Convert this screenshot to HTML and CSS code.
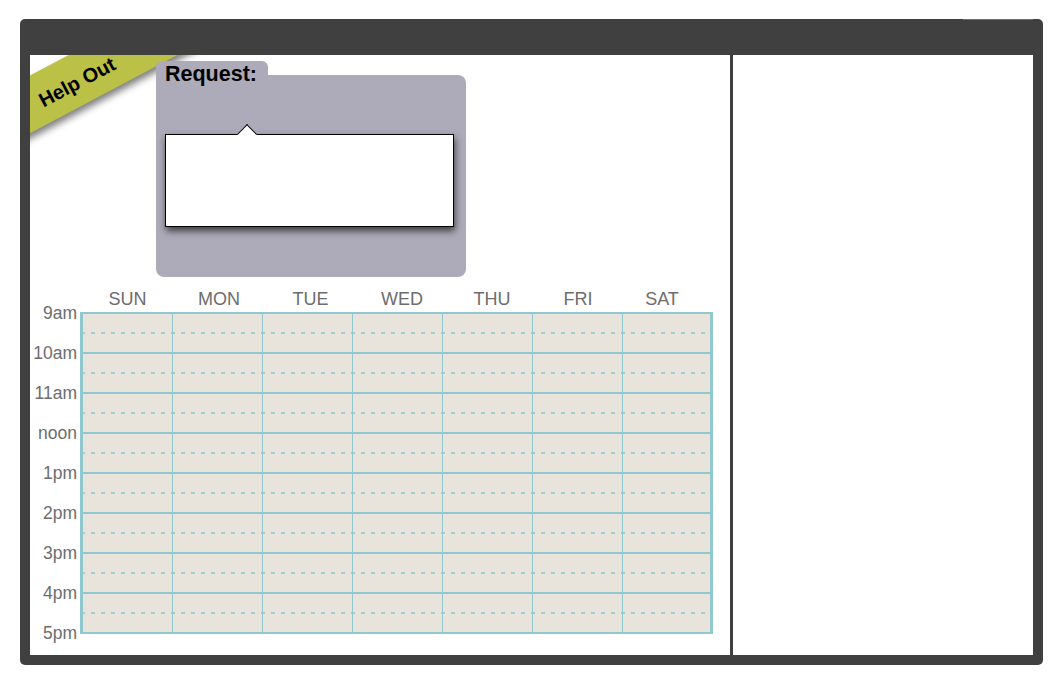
FILE: index.html
```html
<!DOCTYPE html>
<html lang="en">
<head>
<meta charset="utf-8">
<title>Help Out</title>
<link rel="stylesheet" href="styles.css">
</head>
<body>
<div class="frame">
  <div class="titlebar"><span class="titlebar-mark"></span></div>
  <div class="panes">
    <main class="left-pane">
      <div class="ribbon"><div class="ribbon-band"></div></div>
      <span class="ribbon-label">Help Out</span>
      <section class="request">
        <div class="request-tab">Request:</div>
        <div class="request-body">
          <div class="request-input"></div>
        </div>
      </section>
      <section class="calendar">
        <div class="cal-head">
          <span>SUN</span><span>MON</span><span>TUE</span><span>WED</span><span>THU</span><span>FRI</span><span>SAT</span>
        </div>
        <div class="cal-body">
          <div class="times">
            <span>9am</span><span>10am</span><span>11am</span><span>noon</span><span>1pm</span><span>2pm</span><span>3pm</span><span>4pm</span><span>5pm</span>
          </div>
          <div class="grid">
            <div class="row"><div class="cell"></div><div class="cell"></div><div class="cell"></div><div class="cell"></div><div class="cell"></div><div class="cell"></div><div class="cell"></div></div>
            <div class="row"><div class="cell"></div><div class="cell"></div><div class="cell"></div><div class="cell"></div><div class="cell"></div><div class="cell"></div><div class="cell"></div></div>
            <div class="row"><div class="cell"></div><div class="cell"></div><div class="cell"></div><div class="cell"></div><div class="cell"></div><div class="cell"></div><div class="cell"></div></div>
            <div class="row"><div class="cell"></div><div class="cell"></div><div class="cell"></div><div class="cell"></div><div class="cell"></div><div class="cell"></div><div class="cell"></div></div>
            <div class="row"><div class="cell"></div><div class="cell"></div><div class="cell"></div><div class="cell"></div><div class="cell"></div><div class="cell"></div><div class="cell"></div></div>
            <div class="row"><div class="cell"></div><div class="cell"></div><div class="cell"></div><div class="cell"></div><div class="cell"></div><div class="cell"></div><div class="cell"></div></div>
            <div class="row"><div class="cell"></div><div class="cell"></div><div class="cell"></div><div class="cell"></div><div class="cell"></div><div class="cell"></div><div class="cell"></div></div>
            <div class="row"><div class="cell"></div><div class="cell"></div><div class="cell"></div><div class="cell"></div><div class="cell"></div><div class="cell"></div><div class="cell"></div></div>
          </div>
        </div>
      </section>
    </main>
    <div class="divider"></div>
    <aside class="right-pane"></aside>
  </div>
</div>
</body>
</html>
```
FILE: styles.css
```css
html, body {
  margin: 0;
  background: #ffffff;
}

body {
  padding: 19px 0 0 20px;
  font-family: "Liberation Sans", Arial, Helvetica, sans-serif;
}

.frame {
  width: 1023px;
  height: 646px;
  box-sizing: border-box;
  background: #404040;
  border-radius: 5px;
  padding: 0 10px 10px 10px;
  display: flex;
  flex-direction: column;
}

.titlebar {
  height: 36px;
  display: flex;
  justify-content: flex-end;
}

.titlebar-mark {
  width: 70px;
  height: 1px;
  background: #707070;
}

.panes {
  display: flex;
  height: 600px;
}

.left-pane {
  width: 700px;
  background: #ffffff;
  position: relative;
}

.divider {
  width: 3px;
}

.right-pane {
  width: 300px;
  background: #ffffff;
}

/* ribbon (corner banner, clipped to the pane corner) */
.ribbon {
  position: absolute;
  left: 0;
  top: 0;
  width: 220px;
  height: 150px;
  overflow: hidden;
}

.ribbon-band {
  position: absolute;
  left: -83px;
  top: -1px;
  width: 260px;
  height: 51px;
  background: #bbc047;
  transform: rotate(-28deg);
  box-shadow: 0 5px 7px rgba(0, 0, 0, 0.5);
}

.ribbon-label {
  position: absolute;
  left: 2px;
  top: 15px;
  width: 90px;
  height: 24px;
  line-height: 24px;
  text-align: center;
  white-space: nowrap;
  color: #000;
  font-weight: bold;
  font-size: 20px;
  transform: rotate(-28deg);
}

/* request bubble */
.request {
  position: relative;
  z-index: 1;
  width: 310px;
  margin: 6px 0 0 126px;
}

.request-tab {
  width: 112px;
  height: 14px;
  box-sizing: border-box;
  padding-left: 9px;
  background: #adabb9;
  border-radius: 6px 6px 0 0;
  font-weight: bold;
  font-size: 21.5px;
  line-height: 27px;
  color: #000;
  white-space: nowrap;
}

.request-body {
  height: 202px;
  box-sizing: border-box;
  padding: 59px 12px 0 9px;
  background: #adabb9;
  border-radius: 0 8px 8px 8px;
}

.request-input {
  position: relative;
  height: 93px;
  box-sizing: border-box;
  background: #ffffff;
  border: 1px solid #000;
  box-shadow: 1px 4px 7px rgba(0, 0, 0, 0.65);
}

.request-input::before {
  content: "";
  position: absolute;
  left: 74px;
  top: -8px;
  width: 13px;
  height: 13px;
  background: #ffffff;
  border-left: 1px solid #000;
  border-top: 1px solid #000;
  transform: rotate(45deg);
}

/* calendar */
.calendar {
  margin-top: 12px;
}

.cal-head {
  display: grid;
  grid-template-columns: 91px 92px 91px 92px 88px 84px 84px;
  margin-left: 52px;
  height: 20px;
  line-height: 20px;
  font-size: 18px;
  color: #6d6d6d;
  text-align: center;
}

.cal-body {
  display: flex;
  align-items: flex-start;
  margin-top: 3px;
}

.times {
  width: 50px;
  box-sizing: border-box;
  padding-right: 3px;
  margin-top: -9px;
  display: flex;
  flex-direction: column;
  gap: 20px;
  text-align: right;
  font-size: 17.5px;
  line-height: 20px;
  color: #6d6d6d;
}

.grid {
  width: 633px;
  box-sizing: border-box;
  border-left: 3px solid #8fc8cf;
  border-right: 3px solid #8fc8cf;
}

.row {
  display: flex;
  height: 40px;
  box-sizing: border-box;
  border-top: 2px solid #8fc8cf;
  background:
    repeating-linear-gradient(90deg, #9dd0d5 0 2px, transparent 2px 8px, #9dd0d5 8px 10px) 0 18px / 100% 2px no-repeat,
    #e8e4dc;
}

.row:last-child {
  height: 42px;
  border-bottom: 2px solid #8fc8cf;
}

.cell {
  width: 90px;
  box-sizing: border-box;
  border-right: 1px solid #8fc8cf;
}

.cell:last-child {
  flex: 1;
  border-right: none;
}
```
